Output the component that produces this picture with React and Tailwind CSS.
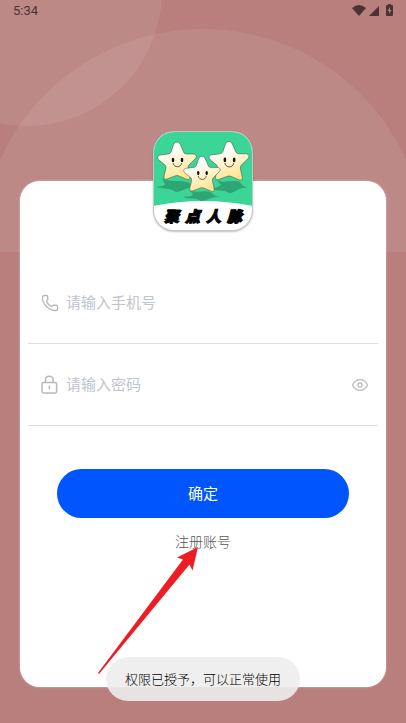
import { useState } from "react";
import { Phone } from "lucide-react";

const STAR =
  "M0 -19 C2 -19 3 -17 4 -15 L7 -8 Q8 -7 10 -7 L17 -7 C20 -6 20 -4 18 -2 L12 4 Q11 5 11 7 L13 16 C13 19 11 19 9 18 L2 15 Q0 14 -2 15 L-10 18 C-13 19 -13 17 -13 15 L-11 7 Q-11 5 -12 4 L-18 -1 C-20 -3 -20 -5 -17 -6 L-9 -7 Q-7 -7 -6 -9 L-4 -15 C-3 -18 -2 -19 0 -19 Z";

function Star({ x, y, scale = 1 }) {
  return (
    <g transform={`translate(${x} ${y}) scale(${scale})`}>
      <path d={STAR} fill="url(#star)" stroke="#4b5b45" strokeWidth="0.6" />
      <ellipse cx="-4" cy="-1" rx="1.3" ry="2.3" fill="#111" />
      <ellipse cx="5" cy="-1" rx="1.3" ry="2.3" fill="#111" />
      <path d="M-4 2 C-3 7 4 7 4.5 2" fill="none" stroke="#333" strokeWidth="0.8" />
    </g>
  );
}

function Logo() {
  return (
    <div className="relative size-[98px] overflow-hidden rounded-[20px] bg-white shadow-[0_0_0_1px_#c9c6c6,0_1px_2px_1px_rgba(0,0,0,0.25)]">
      <svg viewBox="1 0 98 98" className="block size-full" aria-hidden="true">
        <defs>
          <linearGradient id="star" x1="0.3" y1="0" x2="0.7" y2="1">
            <stop offset="0.25" stopColor="#fffefa" />
            <stop offset="1" stopColor="#fde283" />
          </linearGradient>
        </defs>
        <path d="M0 0 H100 V74 Q50 64 0 74 Z" fill="#3bd598" />
        <g fill="#2da575">
          <path d="M9 46 C16 51 26 47 37 51 L39 56 C33 55 30 60 23 60 C17 56 11 57 3 55 C8 54 12 54 12 52 Z" />
          <path d="M36 58 C45 62 52 57 59 61 C60 63 63 65 67 65 C59 64 55 69 48 69 C42 65 36 68 30 65 C35 64 39 65 40 62 Z" />
          <path d="M63 47 C70 53 80 47 87 50 C88 53 92 55 95 56 C87 54 82 61 76 61 C69 57 66 60 58 57 C64 56 66 54 68 53 Z" />
        </g>
        <Star x={24} y={29} />
        <Star x={76} y={29} scale={1.03} />
        <Star x={49} y={42} scale={0.94} />
      </svg>
      <div className="absolute inset-x-0 bottom-1 flex justify-center gap-1.5 text-[15px] leading-5 font-black text-black italic [-webkit-text-stroke:1px_#000]">
        <span>聚</span>
        <span>点</span>
        <span>人</span>
        <span>脉</span>
      </div>
    </div>
  );
}

function LockIcon() {
  return (
    <svg viewBox="0 0 18 20" className="h-5 w-[18px]" fill="none" stroke="#b9b9b9" strokeWidth="1.5" aria-hidden="true">
      <rect x="1" y="7.5" width="14.6" height="10.6" rx="1.6" />
      <path d="M4.5 7.5 V5 C4.5 0 12.1 0 12.1 5 V7.5" />
      <path d="M8.3 10.5 V14" />
    </svg>
  );
}

function EyeIcon() {
  return (
    <svg viewBox="0 0 18 14" className="h-[14px] w-[18px]" fill="none" stroke="#b9b9b9" strokeWidth="1.2" aria-hidden="true">
      <path d="M1.5 7 C5 -0.2 13 -0.2 16.5 7 C13 14.2 5 14.2 1.5 7 Z" />
      <circle cx="9" cy="7" r="2.1" />
    </svg>
  );
}

function StatusBar() {
  return (
    <header className="relative flex h-[22px] items-center justify-between pr-3 pl-[13px] text-[#4c3333]">
      <span className="font-[Roboto,sans-serif] text-[13px]">5:34</span>
      <svg viewBox="0 0 42 14" className="h-[14px] w-[42px]" fill="currentColor" aria-hidden="true">
        <path d="M0 4 Q7 -2 14 4 L7 12 Z" />
        <path d="M27 2 V12 H17 Z" />
        <path d="M36 1 V0 H39 V1 H40 Q41 1 41 2 V11 Q41 12 40 12 H35 Q34 12 34 11 V2 Q34 1 35 1 Z" />
        <path d="M38 3 L35.5 7 H37.2 V10 L39.5 6 H38 Z" fill="#b87f7d" />
      </svg>
    </header>
  );
}

export default function App() {
  const [showPassword, setShowPassword] = useState(false);

  return (
    <div className="relative flex min-h-screen flex-col overflow-hidden bg-[#b87f7d] font-['Noto_Sans_CJK_SC',sans-serif]">
      {/* Background circles */}
      <div className="absolute inset-x-0 top-0 h-[252px] overflow-hidden">
        <div className="absolute -top-36 -left-27 size-[270px] rounded-full bg-white/8" />
        <div className="absolute top-[29px] left-1/2 size-[446px] -translate-x-1/2 rounded-full bg-white/8" />
      </div>

      <StatusBar />

      <main className="relative mx-5 mt-[159px] mb-9 flex flex-1 flex-col rounded-[20px] bg-white px-2 shadow-[0_0_2px_rgba(255,255,255,0.6)]">
        <div className="-mt-[49px] flex justify-center">
          <Logo />
        </div>

        <form className="mt-8" onSubmit={(e) => e.preventDefault()}>
          <div className="flex h-[82px] items-center gap-[7px] border-b border-[#dedede] px-[13px]">
            <label htmlFor="phone" aria-label="请输入手机号">
              <Phone className="size-[18px] text-[#b9b9b9]" strokeWidth={1.8} />
            </label>
            <input
              id="phone"
              type="tel"
              placeholder="请输入手机号"
              className="min-w-0 flex-1 text-[15px] outline-none placeholder:text-[#c0c4cc]"
            />
          </div>
          <div className="flex h-[82px] items-center gap-[7px] border-b border-[#dedede] pr-[9px] pl-[13px]">
            <label htmlFor="password" aria-label="请输入密码">
              <LockIcon />
            </label>
            <input
              id="password"
              type={showPassword ? "text" : "password"}
              placeholder="请输入密码"
              className="min-w-0 flex-1 text-[15px] outline-none placeholder:text-[#c0c4cc]"
            />
            <button type="button" aria-label="显示密码" onClick={() => setShowPassword(!showPassword)}>
              <EyeIcon />
            </button>
          </div>

          <div className="mt-[43px] flex flex-col items-center gap-[11px] px-[29px]">
            <button type="submit" className="h-[49px] w-full rounded-full bg-[#0055ff] text-[15px] text-white">
              确定
            </button>
            <a href="#register" className="text-sm leading-6 font-light text-[#555]">
              注册账号
            </a>
          </div>
        </form>
      </main>

      {/* Toast */}
      <div
        role="status"
        className="absolute bottom-[22px] left-1/2 flex h-11 -translate-x-1/2 items-center rounded-full bg-[#ededed]/90 px-[19px] text-[13px] font-light whitespace-nowrap text-black"
      >
        权限已授予，可以正常使用
      </div>

      {/* Pointer to the register link */}
      <svg viewBox="0 0 100 128" className="absolute top-[547px] left-[98px] h-32 w-[100px]" fill="#ee1c25" aria-hidden="true">
        <path d="M100 0 L79 10.5 L85 12.5 L0 126 L1 127 L91.5 17.5 L94.5 23.5 Z" />
      </svg>
    </div>
  );
}
